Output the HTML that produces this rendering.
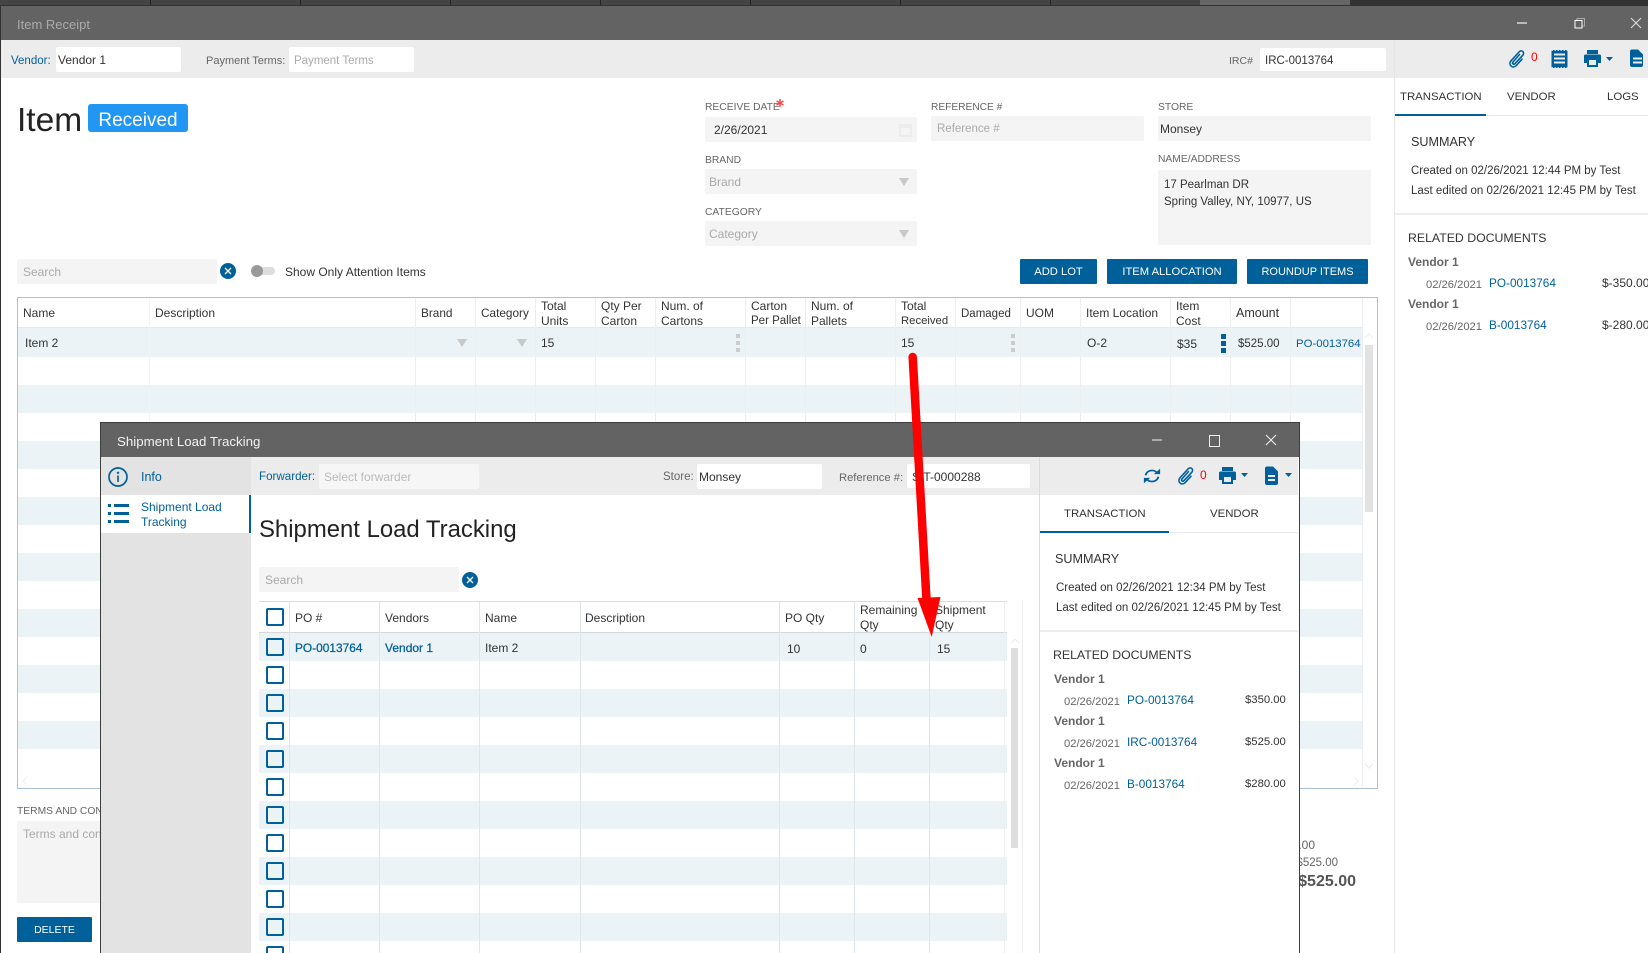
<!DOCTYPE html>
<html><head><meta charset="utf-8"><title>Item Receipt</title>
<style>
html,body{margin:0;padding:0;background:#fff}
#p{position:relative;width:1648px;height:953px;overflow:hidden;background:#fff;font:12px "Liberation Sans",sans-serif;color:#333}
#p div,#p span,#p svg{position:absolute}
.t{line-height:16px;height:16px;white-space:nowrap}
.b{color:#00609a}
.g{color:#aaa}
.l{color:#666}
.lb{color:#666;font-size:10.300px}
.inw{background:#fff;border-radius:2px}
.ing{background:#f4f4f4;border-radius:2px}
.btn{background:#00609a;color:#fff;text-align:center;line-height:26px;height:25px;border-radius:1px;font-size:11.200px}
.v{width:1px;background:#eceff2}
.v2{width:1px;background:#dfe5e8}
.cb{left:266px;width:14px;height:14px;border:2px solid #00609a;border-radius:2px;background:transparent}
.sec{font-size:12.300px;color:#333}
.tab{font-size:11.400px}
.s{font-size:11.500px}
.bd{font-weight:bold;color:#666}
.amt{font-size:11.300px}
</style></head><body><div id="p">

<!-- top strip -->
<div style="left:0;top:0;width:1648px;height:6px;background:#333"></div>
<div style="left:0;top:0;width:1350px;height:5px;background:#444"></div>
<div style="left:1200px;top:0;width:150px;height:5px;background:#666"></div>
<div style="left:150px;top:0;width:1px;height:5px;background:#222"></div>
<div style="left:300px;top:0;width:1px;height:5px;background:#222"></div>
<div style="left:450px;top:0;width:1px;height:5px;background:#222"></div>
<div style="left:600px;top:0;width:1px;height:5px;background:#222"></div>
<div style="left:750px;top:0;width:1px;height:5px;background:#222"></div>
<div style="left:900px;top:0;width:1px;height:5px;background:#222"></div>
<div style="left:1050px;top:0;width:1px;height:5px;background:#222"></div>

<!-- main window chrome -->
<div style="left:0;top:6px;width:1648px;height:34px;background:#636363"></div>
<div class="t" style="left:17px;top:17px;font-size:13px;color:#ababab">Item Receipt</div>
<div style="left:1517px;top:22px;width:10px;height:2px;background:#bbb"></div>
<svg style="left:1574px;top:17px" width="12" height="12" viewBox="0 0 12 12" fill="none"><rect x="3" y="1.500" width="7.500" height="7.500" stroke="#aaa"/><rect x="1" y="3.500" width="7" height="7.500" fill="#636363" stroke="#fff"/></svg>
<svg style="left:1630px;top:17px" width="12" height="12" viewBox="0 0 12 12"><path d="M1 1L11 11M11 1L1 11" stroke="#ddd" stroke-width="1.100"/></svg>
<div style="left:0;top:6px;width:1px;height:947px;background:#333"></div>

<!-- toolbar -->
<div style="left:1px;top:40px;width:1647px;height:38px;background:#ececec"></div>
<div class="t b" style="left:11px;top:53px;font-size:11.500px">Vendor:</div>
<div class="inw" style="left:56px;top:47px;width:125px;height:25px"></div>
<div class="t" style="left:58px;top:52px">Vendor 1</div>
<div class="t l" style="left:206px;top:53px;font-size:11px">Payment Terms:</div>
<div class="inw" style="left:289px;top:47px;width:125px;height:25px"></div>
<div class="t g" style="left:294px;top:53px;font-size:11.500px">Payment Terms</div>
<div class="t l" style="left:1229px;top:53px;font-size:10.500px">IRC#</div>
<div class="inw" style="left:1260px;top:48px;width:126px;height:23px"></div>
<div class="t s" style="left:1265px;top:53px">IRC-0013764</div>

<!-- main toolbar icons -->
<svg style="left:1508px;top:49px" width="18" height="20" viewBox="0 0 18 20" fill="none"><path d="M11.500 5.500L5 13c-1.200 1.500.7 3 2 1.700L14.800 6.200c2.300-2.800-1.200-6-3.800-3.200L3 11.800c-3.300 3.900 1.700 8.600 5.300 4.700L14 10.200" stroke="#00609a" stroke-width="1.600" stroke-linecap="round" stroke-linejoin="round"/></svg>
<div class="t" style="left:1531px;top:49px;color:#f00;font-size:12px">0</div>
<svg style="left:1551px;top:49px" width="17" height="20" viewBox="0 0 17 20"><rect x="0.500" y="1" width="16" height="18" fill="#00609a"/><path d="M.5 1.300H17M.5 18.700H17" stroke="#ececec" stroke-width="1" stroke-dasharray="1.500 1.500"/><rect x="3" y="4.500" width="11" height="2" fill="#ececec"/><rect x="3" y="8.500" width="11" height="2" fill="#ececec"/><rect x="3" y="12.500" width="11" height="2" fill="#ececec"/></svg>
<svg style="left:1583px;top:50px" width="36" height="18" viewBox="0 0 36 18"><path d="M4 0h11v4H4z" fill="#00609a"/><path d="M1 6q0-1.500 1.500-1.500h14q1.500 0 1.500 1.500v7h-3v4H4v-4H1z" fill="#00609a"/><rect x="6" y="10" width="7" height="5" fill="#ececec"/><path d="M23 7h7l-3.500 4z" fill="#00609a"/></svg>
<svg style="left:1629px;top:49px" width="15" height="19" viewBox="0 0 15 19"><path d="M1 2.500Q1 .5 3 .5h6l5 5V16q0 2-2 2H3q-2 0-2-2z" fill="#00609a"/><rect x="4" y="8.500" width="9" height="2" fill="#ececec"/><rect x="4" y="12.500" width="9" height="2" fill="#ececec"/></svg>

<!-- heading -->
<div class="t" style="left:17px;top:102px;height:38px;line-height:38px;font-size:33.500px;color:#222">Item</div>
<div style="left:88px;top:104px;width:100px;height:28px;background:#2196f3;border-radius:3px;color:#fff;font-size:19px;line-height:34px;text-align:center">Received</div>

<!-- form -->
<div class="t lb" style="left:705px;top:100px">RECEIVE DATE</div>
<svg style="left:776px;top:99px" width="8" height="8" viewBox="0 0 8 8"><path d="M4 0v8M.5 2l7 4M7.500 2l-7 4" stroke="#f44" stroke-width="1.500"/></svg>
<div class="ing" style="left:705px;top:117px;width:212px;height:25px"></div>
<div class="t" style="left:714px;top:122px">2/26/2021</div>
<svg style="left:898px;top:122px" width="15" height="16" viewBox="0 0 15 16"><rect x="1" y="2" width="13" height="13" rx="1" fill="#ececec"/><rect x="3" y="6" width="9" height="7" fill="#f4f4f4"/></svg>
<div class="t lb" style="left:705px;top:153px">BRAND</div>
<div class="ing" style="left:705px;top:169px;width:212px;height:25px"></div>
<div class="t g" style="left:709px;top:174px;font-size:12px">Brand</div>
<svg style="left:899px;top:178px" width="11" height="9"><path d="M0 0h10l-5 8z" fill="#c8c8c8"/></svg>
<div class="t lb" style="left:705px;top:205px">CATEGORY</div>
<div class="ing" style="left:705px;top:221px;width:212px;height:25px"></div>
<div class="t g" style="left:709px;top:226px;font-size:12px">Category</div>
<svg style="left:899px;top:230px" width="11" height="9"><path d="M0 0h10l-5 8z" fill="#c8c8c8"/></svg>

<div class="t lb" style="left:931px;top:100px;font-size:10.200px">REFERENCE #</div>
<div class="ing" style="left:931px;top:116px;width:213px;height:25px"></div>
<div class="t g s" style="left:937px;top:121px">Reference #</div>
<div class="t lb" style="left:1158px;top:100px">STORE</div>
<div class="ing" style="left:1158px;top:116px;width:213px;height:25px"></div>
<div class="t" style="left:1160px;top:121px">Monsey</div>
<div class="t lb" style="left:1158px;top:152px">NAME/ADDRESS</div>
<div class="ing" style="left:1158px;top:170px;width:213px;height:75px"></div>
<div class="t s" style="left:1164px;top:177px">17 Pearlman DR</div>
<div class="t s" style="left:1164px;top:194px">Spring Valley, NY, 10977, US</div>

<div class="btn" style="left:1020px;top:259px;width:77px">ADD LOT</div>
<div class="btn" style="left:1107px;top:259px;width:130px">ITEM ALLOCATION</div>
<div class="btn" style="left:1247px;top:259px;width:121px;font-size:11px">ROUNDUP ITEMS</div>

<!-- search -->
<div class="ing" style="left:17px;top:259px;width:200px;height:25px"></div>
<div class="t g" style="left:23px;top:264px">Search</div>
<svg style="left:220px;top:263px" width="16" height="16" viewBox="0 0 16 16"><circle cx="8" cy="8" r="8" fill="#00609a"/><path d="M5 5l6 6M11 5l-6 6" stroke="#fff" stroke-width="1.300"/></svg>
<div style="left:251px;top:267px;width:24px;height:8px;background:#ddd;border-radius:4px"></div>
<div style="left:251px;top:265px;width:12px;height:12px;background:#999;border-radius:6px"></div>
<div class="t" style="left:285px;top:264px">Show Only Attention Items</div>

<!-- main table -->
<div style="left:17px;top:297px;width:1359px;height:490px;border:1px solid #a9c1d9;background:#fff"></div>
<div style="left:18px;top:327px;width:1344px;height:30px;background:#ebf3f6"></div>
<div style="left:18px;top:357px;width:1344px;height:430px;background:repeating-linear-gradient(to bottom,#fff 0,#fff 28px,#ebf3f6 28px,#ebf3f6 56px)"></div>
<div style="left:18px;top:770px;width:1344px;height:17px;background:#fff"></div>
<div style="left:18px;top:327px;width:1344px;height:1px;background:#e6e9ec"></div>
<div class="v" style="left:149px;top:298px;height:489px;background:#f2f4f6"></div>
<div class="v" style="left:415px;top:298px;height:489px"></div>
<div class="v" style="left:475px;top:298px;height:489px"></div>
<div class="v" style="left:535px;top:298px;height:489px"></div>
<div class="v" style="left:595px;top:298px;height:489px"></div>
<div class="v" style="left:655px;top:298px;height:489px"></div>
<div class="v" style="left:745px;top:298px;height:489px"></div>
<div class="v" style="left:805px;top:298px;height:489px"></div>
<div class="v" style="left:895px;top:298px;height:489px"></div>
<div class="v" style="left:955px;top:298px;height:489px"></div>
<div class="v" style="left:1020px;top:298px;height:489px"></div>
<div class="v" style="left:1080px;top:298px;height:489px"></div>
<div class="v" style="left:1170px;top:298px;height:489px"></div>
<div class="v" style="left:1230px;top:298px;height:489px"></div>
<div class="v" style="left:1290px;top:298px;height:489px"></div>
<div class="v" style="left:1362px;top:298px;height:489px"></div>

<div class="t" style="left:23px;top:305px">Name</div>
<div class="t" style="left:155px;top:305px">Description</div>
<div class="t" style="left:421px;top:305px;font-size:11.800px">Brand</div>
<div class="t" style="left:481px;top:305px;font-size:11.800px">Category</div>
<div class="t" style="left:541px;top:298px">Total</div><div class="t" style="left:541px;top:313px">Units</div>
<div class="t" style="left:601px;top:298px">Qty Per</div><div class="t" style="left:601px;top:313px">Carton</div>
<div class="t" style="left:661px;top:298px">Num. of</div><div class="t" style="left:661px;top:313px">Cartons</div>
<div class="t" style="left:751px;top:298px">Carton</div><div class="t" style="left:751px;top:313px;font-size:11.500px">Per Pallet</div>
<div class="t" style="left:811px;top:298px">Num. of</div><div class="t" style="left:811px;top:313px">Pallets</div>
<div class="t" style="left:901px;top:298px">Total</div><div class="t" style="left:901px;top:313px;font-size:11.300px">Received</div>
<div class="t s" style="left:961px;top:306px">Damaged</div>
<div class="t" style="left:1026px;top:305px">UOM</div>
<div class="t" style="left:1086px;top:305px">Item Location</div>
<div class="t" style="left:1176px;top:298px">Item</div><div class="t" style="left:1176px;top:313px">Cost</div>
<div class="t" style="left:1236px;top:305px;font-size:12.500px">Amount</div>

<div class="t" style="left:25px;top:335px">Item 2</div>
<svg style="left:457px;top:339px" width="11" height="9"><path d="M0 0h10l-5 8z" fill="#c8c8c8"/></svg>
<svg style="left:517px;top:339px" width="11" height="9"><path d="M0 0h10l-5 8z" fill="#c8c8c8"/></svg>
<div class="t" style="left:541px;top:335px">15</div>
<div style="left:736px;top:334px;width:4px;height:4px;background:#ccc"></div><div style="left:736px;top:341px;width:4px;height:4px;background:#ccc"></div><div style="left:736px;top:348px;width:4px;height:4px;background:#ccc"></div>
<div class="t" style="left:901px;top:335px">15</div>
<div style="left:1011px;top:334px;width:4px;height:4px;background:#ccc"></div><div style="left:1011px;top:341px;width:4px;height:4px;background:#ccc"></div><div style="left:1011px;top:348px;width:4px;height:4px;background:#ccc"></div>
<div class="t" style="left:1087px;top:335px">O-2</div>
<div class="t" style="left:1177px;top:336px">$35</div>
<div style="left:1221px;top:334px;width:5px;height:5px;background:#00609a"></div><div style="left:1221px;top:341px;width:5px;height:5px;background:#00609a"></div><div style="left:1221px;top:348px;width:5px;height:5px;background:#00609a"></div>
<div class="t s" style="left:1238px;top:336px">$525.00</div>
<div class="t b" style="left:1296px;top:336px;font-size:11.400px">PO-0013764</div>
<div style="left:1365px;top:345px;width:8px;height:167px;background:#e2e2e2"></div>
<svg style="left:1364px;top:333px" width="10" height="7" fill="none"><path d="M1 5l4-4 4 4" stroke="#eee"/></svg>
<svg style="left:1364px;top:763px" width="10" height="7" fill="none"><path d="M1 1l4 4 4-4" stroke="#e8e8e8"/></svg>
<svg style="left:22px;top:776px" width="7" height="10" fill="none"><path d="M5 1L1 5l4 4" stroke="#eee"/></svg>
<svg style="left:1353px;top:776px" width="7" height="10" fill="none"><path d="M1 1l4 4-4 4" stroke="#eee"/></svg>

<!-- bottom of main -->
<div class="t lb" style="left:17px;top:804px">TERMS AND CONDITIONS</div>
<div class="ing" style="left:17px;top:821px;width:200px;height:82px"></div>
<div class="t g" style="left:23px;top:826px">Terms and conditions</div>
<div class="btn" style="left:17px;top:917px;width:75px;font-size:10.500px">DELETE</div>
<div class="t l" style="left:1270px;top:837px;width:45px;text-align:right">$0.00</div>
<div class="t l" style="left:1270px;top:855px;width:68px;text-align:right;font-size:11.500px">$525.00</div>
<div class="t" style="left:1270px;top:874px;width:86px;text-align:right;font-size:16px;font-weight:bold;color:#555">$525.00</div>

<!-- right panel -->
<div style="left:1394px;top:40px;width:1px;height:913px;background:#e4e6e8"></div>
<div style="left:1395px;top:78px;width:253px;height:875px;background:#fff"></div>
<div class="t tab" style="left:1400px;top:89px">TRANSACTION</div>
<div class="t tab" style="left:1507px;top:89px">VENDOR</div>
<div class="t tab" style="left:1607px;top:89px">LOGS</div>
<div style="left:1395px;top:115px;width:253px;height:1px;background:#e8eaec"></div>
<div style="left:1395px;top:114px;width:91px;height:2px;background:#00609a"></div>
<div class="t" style="left:1411px;top:134px;font-size:12.600px">SUMMARY</div>
<div class="t s" style="left:1411px;top:163px">Created on 02/26/2021 12:44 PM by Test</div>
<div class="t s" style="left:1411px;top:183px">Last edited on 02/26/2021 12:45 PM by Test</div>
<div style="left:1395px;top:213px;width:253px;height:2px;background:#eee"></div>
<div class="t sec" style="left:1408px;top:230px">RELATED DOCUMENTS</div>
<div class="t bd" style="left:1408px;top:254px">Vendor 1</div>
<div class="t l" style="left:1426px;top:277px;font-size:11.200px">02/26/2021</div>
<div class="t b" style="left:1489px;top:275px;font-size:11.800px">PO-0013764</div>
<div class="t" style="left:1602px;top:275px">$-350.00</div>
<div class="t bd" style="left:1408px;top:296px">Vendor 1</div>
<div class="t l" style="left:1426px;top:319px;font-size:11.200px">02/26/2021</div>
<div class="t b" style="left:1489px;top:317px;font-size:11.800px">B-0013764</div>
<div class="t" style="left:1602px;top:317px">$-280.00</div>

<!-- modal -->
<div style="left:100px;top:422px;width:1198px;height:540px;border:1px solid #3e3e3e;background:#fff"></div>
<div style="left:101px;top:423px;width:1198px;height:34px;background:#636363"></div>
<div class="t" style="left:117px;top:434px;color:#f2f2f2;font-size:13.300px">Shipment Load Tracking</div>
<div style="left:1152px;top:439px;width:10px;height:2px;background:#aaa"></div>
<div style="left:1209px;top:435px;width:9px;height:10px;border:1px solid #eee"></div>
<svg style="left:1265px;top:434px" width="12" height="12" viewBox="0 0 12 12"><path d="M1 1L11 11M11 1L1 11" stroke="#eee" stroke-width="1.100"/></svg>

<div style="left:101px;top:457px;width:150px;height:496px;background:#e3e3e3"></div>
<svg style="left:108px;top:466px" width="20" height="22" viewBox="0 0 20 22" fill="none"><circle cx="10" cy="11" r="9" stroke="#00609a" stroke-width="1.700"/><circle cx="10" cy="6.800" r="1.200" fill="#00609a"/><rect x="9.200" y="9.500" width="1.600" height="6.500" fill="#00609a"/></svg>
<div class="t b" style="left:141px;top:469px;font-size:12.500px">Info</div>
<div style="left:101px;top:495px;width:150px;height:38px;background:#fff"></div>
<div style="left:249px;top:495px;width:2px;height:38px;background:#00609a"></div>
<svg style="left:108px;top:503px" width="21" height="22" viewBox="0 0 21 22"><g fill="#00609a"><rect x="0" y="1" width="3" height="3"/><rect x="6" y="1" width="15" height="3"/><rect x="0" y="9" width="3" height="3"/><rect x="6" y="9" width="15" height="3"/><rect x="0" y="17" width="3" height="3"/><rect x="6" y="17" width="15" height="3"/></g></svg>
<div class="t b" style="left:141px;top:499px">Shipment Load</div>
<div class="t b" style="left:141px;top:514px">Tracking</div>

<div style="left:251px;top:457px;width:1047px;height:38px;background:#ececec"></div>
<div class="t b" style="left:259px;top:469px;font-size:11.600px">Forwarder:</div>
<div style="left:319px;top:464px;width:160px;height:25px;background:#f6f6f6;border-radius:2px"></div>
<div class="t" style="left:324px;top:469px;color:#bbb;font-size:12px">Select forwarder</div>
<div class="t l" style="left:663px;top:469px;font-size:11.500px">Store:</div>
<div class="inw" style="left:697px;top:464px;width:125px;height:25px"></div>
<div class="t" style="left:699px;top:469px">Monsey</div>
<div class="t l" style="left:839px;top:470px;font-size:11.200px">Reference #:</div>
<div class="inw" style="left:907px;top:464px;width:123px;height:24px"></div>
<div class="t" style="left:912px;top:469px">SIT-0000288</div>
<div style="left:1039px;top:457px;width:1px;height:496px;background:#dcdcdc"></div>

<svg style="left:1143px;top:468px" width="18" height="16" viewBox="0 0 20 21" preserveAspectRatio="none" fill="none"><path d="M3 9.500A7 7 0 0 1 15.500 6" stroke="#00609a" stroke-width="2.200"/><path d="M17 11.500A7 7 0 0 1 4.500 15" stroke="#00609a" stroke-width="2.200"/><path d="M12 8h7V1z" fill="#00609a"/><path d="M8 13H1v7z" fill="#00609a"/></svg>
<svg style="left:1177px;top:466px" width="18" height="20" viewBox="0 0 18 20" fill="none"><path d="M11.500 5.500L5 13c-1.200 1.500.7 3 2 1.700L14.800 6.200c2.300-2.800-1.200-6-3.800-3.200L3 11.800c-3.300 3.900 1.700 8.600 5.300 4.700L14 10.200" stroke="#00609a" stroke-width="1.600" stroke-linecap="round" stroke-linejoin="round"/></svg>
<div class="t" style="left:1200px;top:467px;color:#f00;font-size:12px">0</div>
<svg style="left:1218px;top:467px" width="36" height="18" viewBox="0 0 36 18"><path d="M4 0h11v4H4z" fill="#00609a"/><path d="M1 6q0-1.500 1.500-1.500h14q1.500 0 1.500 1.500v7h-3v4H4v-4H1z" fill="#00609a"/><rect x="6" y="10" width="7" height="5" fill="#ececec"/><path d="M23 6h7l-3.500 4z" fill="#00609a"/></svg>
<svg style="left:1264px;top:466px" width="34" height="20" viewBox="0 0 34 20"><path d="M1 2.500Q1 .5 3 .5h6l5 5V17q0 2-2 2H3q-2 0-2-2z" fill="#00609a"/><rect x="4" y="9" width="7" height="2" fill="#ececec"/><rect x="4" y="13" width="7" height="2" fill="#ececec"/><path d="M21 7h7l-3.500 4z" fill="#00609a"/></svg>

<!-- modal right panel -->
<div class="t tab" style="left:1064px;top:506px">TRANSACTION</div>
<div class="t tab" style="left:1210px;top:506px">VENDOR</div>
<div style="left:1040px;top:532px;width:258px;height:1px;background:#e8eaec"></div>
<div style="left:1040px;top:531px;width:129px;height:2px;background:#00609a"></div>
<div class="t" style="left:1055px;top:551px;font-size:12.600px">SUMMARY</div>
<div class="t s" style="left:1056px;top:580px">Created on 02/26/2021 12:34 PM by Test</div>
<div class="t s" style="left:1056px;top:600px">Last edited on 02/26/2021 12:45 PM by Test</div>
<div style="left:1040px;top:630px;width:258px;height:2px;background:#eee"></div>
<div class="t sec" style="left:1053px;top:647px">RELATED DOCUMENTS</div>
<div class="t bd" style="left:1054px;top:671px">Vendor 1</div>
<div class="t l" style="left:1064px;top:694px;font-size:11.200px">02/26/2021</div>
<div class="t b" style="left:1127px;top:692px;font-size:11.800px">PO-0013764</div>
<div class="t amt" style="left:1245px;top:692px">$350.00</div>
<div class="t bd" style="left:1054px;top:713px">Vendor 1</div>
<div class="t l" style="left:1064px;top:736px;font-size:11.200px">02/26/2021</div>
<div class="t b" style="left:1127px;top:734px;font-size:11.800px">IRC-0013764</div>
<div class="t amt" style="left:1245px;top:734px">$525.00</div>
<div class="t bd" style="left:1054px;top:755px">Vendor 1</div>
<div class="t l" style="left:1064px;top:778px;font-size:11.200px">02/26/2021</div>
<div class="t b" style="left:1127px;top:776px;font-size:11.800px">B-0013764</div>
<div class="t amt" style="left:1245px;top:776px">$280.00</div>

<!-- modal body -->
<div class="t" style="left:259px;top:515px;height:30px;line-height:30px;font-size:23.900px;color:#222">Shipment Load Tracking</div>
<div class="ing" style="left:259px;top:567px;width:200px;height:25px"></div>
<div class="t g" style="left:265px;top:572px">Search</div>
<svg style="left:462px;top:572px" width="16" height="16" viewBox="0 0 16 16"><circle cx="8" cy="8" r="8" fill="#00609a"/><path d="M5 5l6 6M11 5l-6 6" stroke="#fff" stroke-width="1.300"/></svg>

<div style="left:259px;top:601px;width:748px;height:1px;background:#ddd"></div>
<div style="left:259px;top:632px;width:748px;height:1px;background:#d4d8da"></div>
<div style="left:259px;top:633px;width:748px;height:28px;background:#ebf3f6"></div>
<div style="left:259px;top:661px;width:748px;height:292px;background:repeating-linear-gradient(to bottom,#fff 0,#fff 28px,#ebf3f6 28px,#ebf3f6 56px)"></div>
<div class="v2" style="left:289px;top:602px;height:351px"></div>
<div class="v2" style="left:379px;top:602px;height:351px"></div>
<div class="v2" style="left:479px;top:602px;height:351px"></div>
<div class="v2" style="left:580px;top:602px;height:351px"></div>
<div class="v2" style="left:779px;top:602px;height:351px"></div>
<div class="v2" style="left:854px;top:602px;height:351px"></div>
<div class="v2" style="left:929px;top:602px;height:351px"></div>
<div class="v" style="left:1004px;top:602px;height:351px"></div>
<div class="v" style="left:1022px;top:600px;height:353px"></div>
<div style="left:1011px;top:648px;width:7px;height:200px;background:#dedede"></div>
<svg style="left:1010px;top:638px" width="10" height="7" fill="none"><path d="M1 5l4-4 4 4" stroke="#eee"/></svg>

<div class="t" style="left:295px;top:610px">PO #</div>
<div class="t" style="left:385px;top:610px">Vendors</div>
<div class="t" style="left:485px;top:610px">Name</div>
<div class="t" style="left:585px;top:610px">Description</div>
<div class="t" style="left:785px;top:610px">PO Qty</div>
<div class="t" style="left:860px;top:602px">Remaining</div><div class="t" style="left:860px;top:617px">Qty</div>
<div class="t" style="left:935px;top:602px">Shipment</div><div class="t" style="left:935px;top:617px">Qty</div>

<div class="t b" style="left:295px;top:640px;font-size:11.900px;-webkit-text-stroke:.25px #00609a">PO-0013764</div>
<div class="t b" style="left:385px;top:640px;font-size:12px;-webkit-text-stroke:.25px #00609a">Vendor 1</div>
<div class="t" style="left:485px;top:640px">Item 2</div>
<div class="t" style="left:787px;top:641px">10</div>
<div class="t" style="left:860px;top:641px">0</div>
<div class="t" style="left:937px;top:641px">15</div>

<div class="cb" style="top:608px"></div>
<div class="cb" style="top:638px"></div>
<div class="cb" style="top:666px"></div>
<div class="cb" style="top:694px"></div>
<div class="cb" style="top:722px"></div>
<div class="cb" style="top:750px"></div>
<div class="cb" style="top:778px"></div>
<div class="cb" style="top:806px"></div>
<div class="cb" style="top:834px"></div>
<div class="cb" style="top:862px"></div>
<div class="cb" style="top:890px"></div>
<div class="cb" style="top:918px"></div>
<div class="cb" style="top:946px"></div>

<!-- red arrow -->
<svg style="left:0;top:0" width="1648" height="953" viewBox="0 0 1648 953"><path d="M912.700 357L926.500 600" stroke="#f00" stroke-width="8.500" stroke-linecap="round" fill="none"/><path d="M917.500 598L940.500 597L931.700 637z" fill="#f00"/></svg>

</div></body></html>
